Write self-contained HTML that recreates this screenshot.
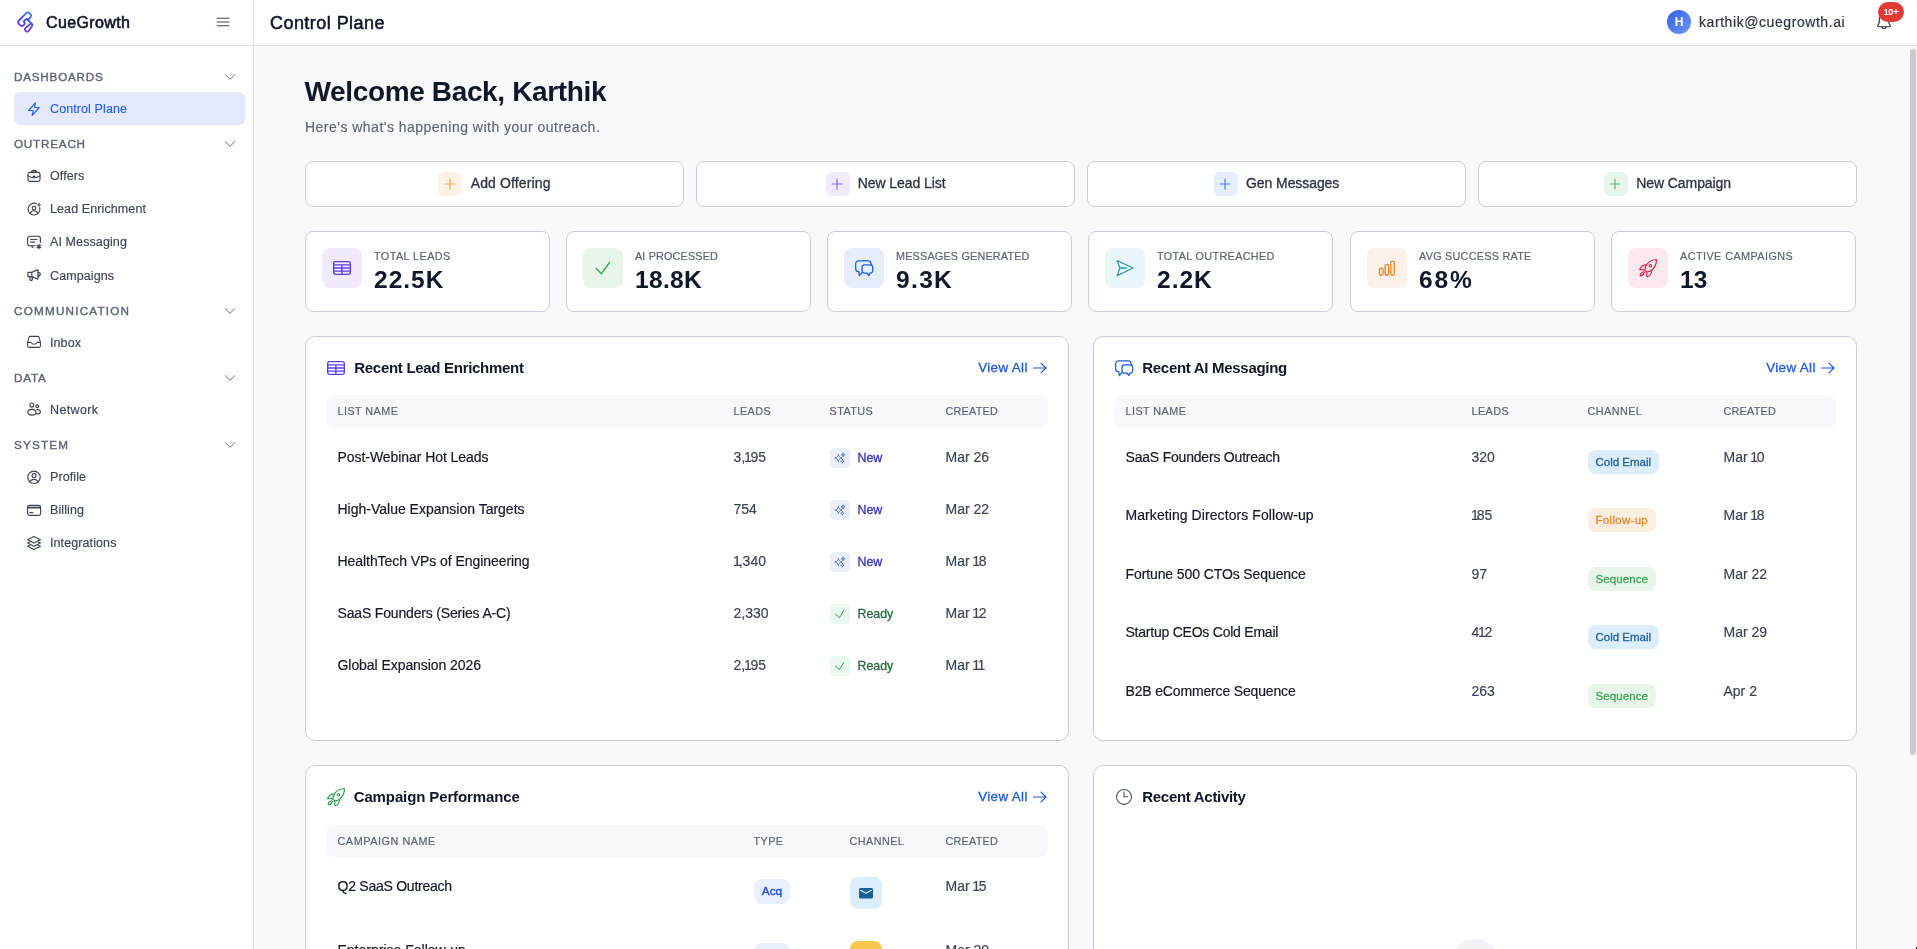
<!DOCTYPE html>
<html lang="en">
<head>
<meta charset="utf-8">
<title>CueGrowth – Control Plane</title>
<style>
*{box-sizing:border-box;margin:0;padding:0}
html,body{width:1917px;height:949px;overflow:hidden;background:#f8f9fb;font-family:"Liberation Sans",sans-serif;color:#111827}
svg{display:block}
#sidebar,#top,#main{will-change:transform}
/* ---------- sidebar ---------- */
#sidebar{position:absolute;left:0;top:0;width:254px;height:949px;background:#fff;border-right:1px solid #e3e6ec}
#brand{position:absolute;left:0;top:0;width:253px;height:46px;border-bottom:1px solid #e3e6ec}
#brand .logo{position:absolute;left:10px;top:5px}
#brand .name{position:absolute;left:46px;top:13.2px;font-size:16px;font-weight:400;line-height:20px;letter-spacing:.38px;color:#0f172a;-webkit-text-stroke:.6px #0f172a}
#brand .burger{position:absolute;left:216px;top:17px}
.sec{position:absolute;left:14px;width:231px;height:20px;font-size:11.7px;font-weight:400;letter-spacing:.78px;line-height:20px;color:#5b6579;-webkit-text-stroke:.38px #5b6579}
.sec svg{position:absolute;right:9px;top:4.5px}
.nav{position:absolute;left:14px;width:231px;height:33px;border-radius:6px;font-size:12.5px;line-height:33px;color:#3b4558;padding:1.3px 0 0 36px;white-space:nowrap;letter-spacing:.1px;-webkit-text-stroke:.15px}
.nav svg{position:absolute;left:12px;top:8.5px}
.nav.on{background:#e4eafb;color:#2563eb}
/* ---------- header ---------- */
#top{position:absolute;left:254px;top:0;width:1663px;height:46px;background:#fff;border-bottom:1px solid #e3e6ec}
#top h1{position:absolute;left:16px;top:11px;font-size:18px;line-height:24px;font-weight:400;letter-spacing:.45px;-webkit-text-stroke:.55px #0f172a;color:#0f172a;white-space:nowrap}
#top .avatar{position:absolute;left:1413px;top:10px;width:24px;height:24px;border-radius:50%;background:linear-gradient(135deg,#2f62e6,#6f97f0);color:#fff;font-size:12px;font-weight:700;line-height:24px;text-align:center}
#top .mail{position:absolute;left:1445px;top:12.4px;font-size:14px;line-height:20px;letter-spacing:.57px;color:#2b3445;-webkit-text-stroke:.2px #2b3445;white-space:nowrap}
#top .bell{position:absolute;left:1621px;top:13px}
#top .badge{position:absolute;left:1624px;top:2px;width:26px;height:20px;border-radius:10px;background:#e53935;color:#fff;font-size:9.500px;font-weight:700;letter-spacing:-.3px;line-height:20px;text-align:center}
/* ---------- main ---------- */
#main{position:absolute;left:254px;top:46px;width:1663px;height:903px;overflow:hidden}
#thumb{position:absolute;left:1656px;top:3px;width:6px;height:706px;border-radius:3px;background:#c9cbd1}
#main h2{position:absolute;left:50.5px;top:26px;font-size:28px;line-height:40px;font-weight:700;letter-spacing:-.36px;color:#0f172a;white-space:nowrap}
#main .sub{position:absolute;left:51px;top:71px;font-size:14px;line-height:20px;letter-spacing:.48px;color:#5b6579;white-space:nowrap;-webkit-text-stroke:.15px}

/* quick actions */
.qa{position:absolute;top:115px;width:379px;height:46px;background:#fff;border:1px solid #c9ceda;border-radius:8px;display:flex;align-items:center;justify-content:center;font-size:14px;letter-spacing:.12px;padding-bottom:1.200px;color:#2b3445;-webkit-text-stroke:.3px #2b3445;white-space:nowrap}
.qa i{display:block;width:24px;height:24px;border-radius:6px;margin-right:8.300px;position:relative;top:.6px}
.qa i svg{position:absolute;left:5.500px;top:5.500px}
/* stat cards */
.st{position:absolute;top:185px;width:245px;height:81px;background:#fff;border:1px solid #c9ceda;border-radius:8px}
.st i{position:absolute;left:16px;top:16px;width:40px;height:40px;border-radius:8px}
.st i svg{position:absolute;left:10px;top:10px}
.st .l{position:absolute;left:68px;top:17px;font-size:10.8px;line-height:14px;letter-spacing:.45px;color:#5b6579;white-space:nowrap;-webkit-text-stroke:.2px #5b6579}
.st .v{position:absolute;left:68px;top:32.600px;font-size:24.5px;line-height:30px;font-weight:700;letter-spacing:1px;color:#0f172a;white-space:nowrap}
/* panels */
.pn{position:absolute;width:764px;background:#fff;border:1px solid #c9ceda;border-radius:10px}
.pn .ic{position:absolute;left:20px;top:21px}
.pn h3{position:absolute;left:48.3px;top:21px;font-size:15px;line-height:20px;font-weight:700;letter-spacing:-.3px;color:#0f172a;white-space:nowrap}
.pn .va{position:absolute;right:20px;top:20.7px;font-size:13.4px;line-height:20px;color:#1d5bdb;-webkit-text-stroke:.3px #1d5bdb;letter-spacing:.38px;white-space:nowrap;padding-right:20.2px;text-decoration:none}
.pn .va svg{position:absolute;right:0;top:3.6px}
.tb{position:absolute;left:20px;top:58px;width:722px}
.th{position:relative;height:33px;background:#f7f8fa;border-radius:8px;font-size:10.8px;line-height:33px;letter-spacing:.45px;color:#5b6579;-webkit-text-stroke:.2px #5b6579}
.tr{position:relative;font-size:14px;color:#3b4558;-webkit-text-stroke:.18px}
.th>span,.tr>span{position:absolute;top:0;white-space:nowrap}
.tr>span{top:.3px}
.tr .n{color:#111827}
.c1{left:11.5px}
.o{margin:0 -1.3px}
.ol{margin:0 -2px 0 -.6px}

.t1 .tr{height:52px;line-height:52px}
.t2 .tr{height:58.5px;line-height:52px}
.t3 .tr{height:64px;line-height:52px}
.tb.t3{top:59px}.t3 .th{height:32px}
.th+.tr{margin-top:3px}
.t1 .c2{left:407.5px}.t1 .c3{left:503.5px}.t1 .c4{left:619.5px}
.t2 .c2{left:357.5px}.t2 .c3{left:473.5px}.t2 .c4{left:609.5px}
.t3 .c2{left:427.5px}.t3 .c3{left:523.5px}.t3 .c4{left:619.5px}
.s{font-size:12.4px;padding-left:28px;-webkit-text-stroke:.3px;margin-top:.8px}
.s i{position:absolute;left:0;top:16.2px;width:20px;height:20px;border-radius:4.5px}
.s.new{color:#3636b2}.s.new i{background:#ebf0fd}
.s.rdy{color:#266b3e}.s.rdy i{background:#eaf9f0}
.bd{display:block;margin-top:19px;height:24px;border-radius:8px;padding:0 8px;font-size:11.5px;line-height:24px;font-weight:400;-webkit-text-stroke:.3px}
.ce{background:#dcedfc;color:#24609a}
.fu{background:#fdeee2;color:#e8872e;letter-spacing:.3px}
.sq{background:#e8f5eb;color:#3aa655;letter-spacing:.1px}
.acq{background:#e9effc;color:#2456e0;font-size:11.800px;border-radius:8px;height:25px;line-height:25px;padding:0 8.300px;-webkit-text-stroke:.42px}
.ch{display:block;margin-top:17px;width:32px;height:32px;border-radius:8px;position:relative}
.ch svg{position:absolute;left:9px;top:10.700px}
.ch.mail{background:#dcedfc}
.ch.li{background:#f7c84e}
.empty{position:absolute;left:356.5px;top:173px;width:48px;height:48px;border-radius:50%;background:#f0f2f6}
#corner{position:absolute;right:0;bottom:0;width:1px;height:2px;background:#1b1b1b;box-shadow:-1px 0 0 #fff,0 -1px 0 #fff,-1px -1px 0 #fff}
</style>
</head>
<body>
<aside id="sidebar">
  <div id="brand">
    <span class="logo"><svg width="40" height="35" viewBox="0 0 40 35" fill="none" stroke="url(#lg)" stroke-width="1.75" stroke-linecap="round" stroke-linejoin="round"><defs><linearGradient id="lg" x1="8" y1="26" x2="23" y2="7" gradientUnits="userSpaceOnUse"><stop offset="0" stop-color="#8a2ff2"/><stop offset=".45" stop-color="#4a3df5"/><stop offset="1" stop-color="#2088f6"/></linearGradient></defs><path d="M16.16 8.17Q17.70 6.60 19.31 8.10L20.39 9.10Q22.00 10.60 20.46 12.17L18.66 14.03Q18.00 14.70 17.15 14.30L17.15 14.30Q16.30 13.90 15.62 14.55L14.25 15.88Q13.30 16.80 14.35 17.60L14.35 17.60Q15.40 18.40 14.42 19.28L13.24 20.33Q11.60 21.80 10.10 20.19L8.80 18.81Q7.30 17.20 8.84 15.63Z"/><path d="M16.60 14.00L21.46 18.48Q23.00 19.90 21.77 21.60L18.73 25.80Q17.50 27.50 15.88 26.16L15.62 25.94Q14.00 24.60 15.55 23.19L20.80 18.40"/></svg></span>
    <span class="name">CueGrowth</span>
    <span class="burger"><svg width="14" height="10" viewBox="0 0 14 10" fill="none" stroke="#3b4558" stroke-width="1.1" stroke-linecap="round"><path d="M1 1.3h12M1 5h12M1 8.700h12"/></svg></span>
  </div>
  <nav id="menu">
    <div class="sec" style="top:66.6px">DASHBOARDS<svg width="12" height="12" viewBox="0 0 12 12" fill="none" stroke="#677084" stroke-width="1" stroke-linecap="round" stroke-linejoin="round"><path d="M1.300 3.700L6 8.300l4.700-4.600"/></svg></div>
    <a class="nav on" style="top:92px"><svg width="16" height="16" viewBox="0 0 16 16" fill="none" stroke="#2563eb" stroke-width="1.2" stroke-linecap="round" stroke-linejoin="round"><path d="M9.4 1.8L2.7 9.5h4.5l-1 4.8 7.1-7.8H8.6z"/></svg>Control Plane</a>
    <div class="sec" style="top:133.8px">OUTREACH<svg width="12" height="12" viewBox="0 0 12 12" fill="none" stroke="#677084" stroke-width="1" stroke-linecap="round" stroke-linejoin="round"><path d="M1.300 3.700L6 8.300l4.700-4.600"/></svg></div>
    <a class="nav" style="top:159px"><svg width="16" height="16" viewBox="0 0 16 16" fill="none" stroke="#3b4558" stroke-width="1.15" stroke-linecap="round" stroke-linejoin="round"><rect x="2" y="4.400" width="12" height="8.900" rx="1.900"/><path d="M5.600 4.400v-.5a1.700 1.700 0 0 1 1.700-1.700h1.400a1.700 1.700 0 0 1 1.700 1.700v.5z" fill="#3b4558" fill-opacity=".55"/><path d="M2 7.900c1.900 1.300 3.900 1.900 6 1.900s4.100-.6 6-1.900M7.100 8.300h1.800"/></svg>Offers</a>
    <a class="nav" style="top:192px"><svg width="16" height="16" viewBox="0 0 16 16" fill="none" stroke="#3b4558" stroke-width="1.15" stroke-linecap="round" stroke-linejoin="round"><path d="M13.700 6.500A5.900 5.900 0 1 1 10.200 2.600"/><circle cx="8" cy="7.100" r="1.800"/><path d="M4.500 12.400c.3-1.700 1.600-2.700 3.500-2.700s3.200 1 3.500 2.700"/><path d="M13 2.100c.150 1.150.650 1.650 1.800 1.800-1.150.150-1.650.650-1.800 1.800-.150-1.150-.650-1.650-1.800-1.800 1.150-.150 1.650-.650 1.800-1.800z" fill="#3b4558" stroke-width=".4"/></svg>Lead Enrichment</a>
    <a class="nav" style="top:225px"><svg width="16" height="16" viewBox="0 0 16 16" fill="none" stroke="#3b4558" stroke-width="1.15" stroke-linecap="round" stroke-linejoin="round"><path d="M9.300 11.700H4.900l1.900 1.800M4.900 11.700H3.900A2.300 2.300 0 0 1 1.600 9.400V4.500A2.300 2.300 0 0 1 3.900 2.200h8.200a2.300 2.300 0 0 1 2.300 2.300v3.800"/><path d="M4.700 5.500h6.200M4.700 8.100h3.900"/><path d="M12.900 10.400v4.400M11 11.500l3.800 2.200M11 13.700l3.800-2.200" stroke-width="1.200"/><circle cx="12.900" cy="12.600" r="1.100" fill="#3b4558" stroke="none"/></svg>AI Messaging</a>
    <a class="nav" style="top:258.5px"><svg width="16" height="16" viewBox="0 0 16 16" fill="none" stroke="#3b4558" stroke-width="1.15" stroke-linecap="round" stroke-linejoin="round"><path d="M2 5.300h3.800l5.600-2.400c.3-.1.600.1.600.4v8.300c0 .3-.3.500-.6.400L5.800 9.600H2z" stroke-width="1.250"/><path d="M5.800 5.300v4.300"/><path d="M4 9.600v3.200c0 .3.200.5.500.5h1.300c.3 0 .5-.2.500-.5V9.900" stroke-width="1.250"/><path d="M12.300 5.300c1.200.2 2 .9 2 1.850s-.8 1.650-2 1.850" stroke-width="1.300"/></svg>Campaigns</a>
    <div class="sec" style="top:300.5px"><span style="letter-spacing:1.22px">COMMUNICATION</span><svg width="12" height="12" viewBox="0 0 12 12" fill="none" stroke="#677084" stroke-width="1" stroke-linecap="round" stroke-linejoin="round"><path d="M1.300 3.700L6 8.300l4.700-4.600"/></svg></div>
    <a class="nav" style="top:326px"><svg width="16" height="16" viewBox="0 0 16 16" fill="none" stroke="#3b4558" stroke-width="1.15" stroke-linecap="round" stroke-linejoin="round"><g transform="translate(.55 -1.150) scale(.935 1)"><path d="M3.900 2.500h8.200c.600 0 1.100.400 1.300 1l1.400 4.600c.100.200.100.400.100.600v3.200a1.600 1.600 0 0 1-1.600 1.600H2.700a1.600 1.600 0 0 1-1.600-1.600V8.700c0-.200 0-.400.100-.600L2.600 3.500c.200-.600.700-1 1.300-1z"/><path d="M1.300 8.500h3.100c.300 0 .500.150.700.400.600.900 1.600 1.500 2.900 1.500s2.300-.600 2.900-1.500c.200-.250.400-.400.700-.400h3.100"/></g></svg>Inbox</a>
    <div class="sec" style="top:367.6px">DATA<svg width="12" height="12" viewBox="0 0 12 12" fill="none" stroke="#677084" stroke-width="1" stroke-linecap="round" stroke-linejoin="round"><path d="M1.300 3.700L6 8.300l4.700-4.600"/></svg></div>
    <a class="nav" style="top:393px"><svg width="16" height="16" viewBox="0 0 16 16" fill="none" stroke="#3b4558" stroke-width="1.15" stroke-linecap="round" stroke-linejoin="round"><g transform="translate(.5 -.9) scale(.94 1)"><circle cx="5.700" cy="3.900" r="2.050"/><path d="M1.300 11.500c0-1.900 1.700-3.200 4.400-3.200s4.400 1.300 4.400 3.200c0 1.700-1.800 2.500-4.400 2.500s-4.400-.8-4.400-2.500z"/><circle cx="11.500" cy="5.200" r="1.500"/><path d="M10.800 8.600c.3-.1.600-.1.900-.1 1.900 0 3.100.9 3.100 2.300 0 1.300-1.200 1.900-2.900 1.900-.5 0-1-.050-1.400-.150"/></g></svg><span style="letter-spacing:.36px">Network</span></a>
    <div class="sec" style="top:434.5px"><span style="letter-spacing:1.2px">SYSTEM</span><svg width="12" height="12" viewBox="0 0 12 12" fill="none" stroke="#677084" stroke-width="1" stroke-linecap="round" stroke-linejoin="round"><path d="M1.300 3.700L6 8.300l4.700-4.600"/></svg></div>
    <a class="nav" style="top:460px"><svg width="16" height="16" viewBox="0 0 16 16" fill="none" stroke="#3b4558" stroke-width="1.15" stroke-linecap="round" stroke-linejoin="round"><circle cx="8" cy="8.300" r="6.200"/><circle cx="8" cy="6.500" r="1.950"/><path d="M3.900 12.900c.7-1.700 2.200-2.600 4.100-2.600s3.400.9 4.100 2.600"/></svg>Profile</a>
    <a class="nav" style="top:493px"><svg width="16" height="16" viewBox="0 0 16 16" fill="none" stroke="#3b4558" stroke-width="1.15" stroke-linecap="round" stroke-linejoin="round"><rect x="1.600" y="3.300" width="13" height="10.100" rx="1.900"/><path d="M1.600 5.600h13" stroke-width="1.800" stroke-linecap="butt"/><path d="M3.900 10.700h2.700" stroke-width="1.300"/></svg>Billing</a>
    <a class="nav" style="top:526px"><svg width="16" height="16" viewBox="0 0 16 16" fill="none" stroke="#3b4558" stroke-width="1.15" stroke-linecap="round" stroke-linejoin="round"><path d="M8 1.500l6.400 3.200L8 7.900 1.600 4.700z"/><path d="M3.800 6.900L1.600 8l6.400 3.200L14.400 8l-2.200-1.100"/><path d="M3.800 10.200l-2.200 1.100 6.400 3.200 6.400-3.200-2.200-1.100"/></svg>Integrations</a>
  </nav>
</aside>
<header id="top">
  <h1>Control Plane</h1>
  <span class="avatar">H</span>
  <span class="mail">karthik@cuegrowth.ai</span>
  <span class="bell"><svg width="18" height="18" viewBox="0 0 18 18" fill="none" stroke="#2b3445" stroke-width="1.15" stroke-linecap="round" stroke-linejoin="round"><path d="M9 1.800c-2.800 0-4.700 2.100-4.700 4.800v2.900L2.700 12.700c-.2.500.1 1 .6 1h11.400c.5 0 .8-.5.600-1l-1.600-3.200V6.600c0-2.700-1.900-4.800-4.700-4.800z"/><path d="M6.900 13.900c.2 1.100 1 1.800 2.100 1.800s1.900-.7 2.100-1.800"/></svg></span>
  <span class="badge">10+</span>
</header>
<main id="main">
  <h2>Welcome Back, Karthik</h2>
  <p class="sub">Here's what's happening with your outreach.</p>
  <nav id="actions">
    <a class="qa" style="left:51px"><i style="background:#fdf0e4"><svg width="12" height="12" viewBox="0 0 12 12"><path d="M6 1.100v9.800M1.100 6h9.800" stroke="#f0a35a" stroke-width="1.2" stroke-linecap="round" fill="none"/></svg></i>Add Offering</a>
    <a class="qa" style="letter-spacing:-.08px;left:442px"><i style="background:#efeafc"><svg width="12" height="12" viewBox="0 0 12 12"><path d="M6 1.100v9.800M1.100 6h9.800" stroke="#8b6fe0" stroke-width="1.2" stroke-linecap="round" fill="none"/></svg></i>New Lead List</a>
    <a class="qa" style="letter-spacing:-.08px;left:833px"><i style="background:#e6edfc"><svg width="12" height="12" viewBox="0 0 12 12"><path d="M6 1.100v9.800M1.100 6h9.800" stroke="#4f7be8" stroke-width="1.2" stroke-linecap="round" fill="none"/></svg></i>Gen Messages</a>
    <a class="qa" style="letter-spacing:-.08px;left:1224px"><i style="background:#e8f5eb"><svg width="12" height="12" viewBox="0 0 12 12"><path d="M6 1.100v9.800M1.100 6h9.800" stroke="#5cb878" stroke-width="1.2" stroke-linecap="round" fill="none"/></svg></i>New Campaign</a>
  </nav>
  <section id="stats">
    <div class="st" style="left:51px"><i style="background:#efeafc"><svg width="20" height="20" viewBox="0 0 20 20" fill="none" stroke="#5f3be3" stroke-width="1.35"><rect x="1.650" y="3.650" width="16.700" height="12.700" rx="1.800"/><path d="M1.650 6.900h16.700M1.650 10h16.700M1.650 13.150h16.700M9.900 6.900v9.450"/></svg></i><span class="l">TOTAL LEADS</span><span class="v">22.5K</span></div>
    <div class="st" style="left:312px"><i style="background:#e8f5eb"><svg width="20" height="20" viewBox="0 0 20 20" fill="none" stroke="#34a853" stroke-width="1.400" stroke-linecap="round" stroke-linejoin="round"><path d="M3.300 10.500l5.100 5.200 8.200-11.200"/></svg></i><span class="l" style="letter-spacing:0.17px">AI PROCESSED</span><span class="v" style="letter-spacing:0.35px">18.8K</span></div>
    <div class="st" style="left:573px"><i style="background:#e6edfc"><svg width="20" height="20" viewBox="0 0 20 20" fill="none" stroke="#1d5de0" stroke-width="1.250" stroke-linecap="round" stroke-linejoin="round"><path d="M17.100 6.800V5.700A2.900 2.900 0 0 0 14.200 2.800H4.600A2.900 2.900 0 0 0 1.700 5.700v5.100a2.900 2.900 0 0 0 2.900 2.900h.2l.6 3.900 2.600-2.900"/><path d="M10.500 6.900h5.700a2.500 2.500 0 0 1 2.500 2.500v3.100a2.500 2.500 0 0 1-2.500 2.500h-.3l-.9 2.500-2.100-2.500h-2.400a2.500 2.500 0 0 1-2.500-2.500V9.400a2.500 2.500 0 0 1 2.500-2.500z"/></svg></i><span class="l" style="letter-spacing:0.2px">MESSAGES GENERATED</span><span class="v" style="letter-spacing:1.35px">9.3K</span></div>
    <div class="st" style="left:834px"><i style="background:#e9f5f8"><svg width="20" height="20" viewBox="0 0 20 20" fill="none" stroke="#2b9bb0" stroke-width="1.300" stroke-linecap="round" stroke-linejoin="round"><path d="M2.200 2.700l15.900 7.300-15.900 7.600 2.700-7.600zM4.900 10h6.400"/></svg></i><span class="l" style="letter-spacing:0.36px">TOTAL OUTREACHED</span><span class="v">2.2K</span></div>
    <div class="st" style="left:1096px"><i style="background:#fdf2e9"><svg width="20" height="20" viewBox="0 0 20 20" fill="none" stroke="#e8832a" stroke-width="1.300"><rect x="2.550" y="10.150" width="3.500" height="7.100" rx="1.450"/><rect x="8.150" y="6.450" width="3.500" height="10.800" rx="1.450"/><rect x="13.800" y="3.050" width="3.500" height="14.200" rx="1.450"/></svg></i><span class="l" style="letter-spacing:0.27px">AVG SUCCESS RATE</span><span class="v" style="letter-spacing:1.9px">68%</span></div>
    <div class="st" style="left:1357px"><i style="background:#fbe9ed"><svg width="20" height="20" viewBox="-1 -1 20 20" fill="none" stroke="#d81e4a" stroke-width="1.150" stroke-linecap="round" stroke-linejoin="round"><path d="M17.500.500C12.500.900 8.600 3.300 6.900 7c-.7 1.500-1.100 3-1.200 4.400l2.800 1.600c1.400-.3 2.800-.900 4-1.800 3.300-2.400 5-6.200 5-10.700z"/><circle cx="11.400" cy="6.700" r="1.250"/><path d="M7.200 5.900C5.300 5.800 3.600 6.500 2.300 7.900 1.500 8.800.900 9.800.600 10.700l4.700-.100"/><path d="M12.500 11.500c.2 1.900-.4 3.600-1.700 4.900-.900.800-1.900 1.300-2.900 1.600l-.200-4.700"/><path d="M4.600 12.700c-1.500.300-2.500 1.100-3 2.300-.3.700-.4 1.300-.400 1.800.5 0 1.100-.100 1.800-.400 1.200-.5 2-1.500 2.300-3"/></svg></i><span class="l">ACTIVE CAMPAIGNS</span><span class="v" style="letter-spacing:0px">13</span></div>
  </section>
  <section class="pn" id="p1" style="left:51px;top:290px;height:405px">
    <span class="ic"><svg width="20" height="20" viewBox="0 0 20 20" fill="none" stroke="#5f3be3" stroke-width="1.35"><rect x="1.650" y="3.650" width="16.700" height="12.700" rx="1.800"/><path d="M1.650 6.900h16.700M1.650 10h16.700M1.650 13.150h16.700M9.900 6.900v9.450"/></svg></span><h3>Recent Lead Enrichment</h3><a class="va">View All<svg width="16" height="14" viewBox="0 0 16 14"><path d="M1.500 7h12.500M9 2.100L14 7l-5 4.900" stroke="#1d5bdb" stroke-width="1.2" stroke-linecap="round" stroke-linejoin="round" fill="none"/></svg></a>
    <div class="tb t1">
      <div class="th"><span class="c1">LIST NAME</span><span class="c2">LEADS</span><span class="c3">STATUS</span><span class="c4" style="letter-spacing:.25px">CREATED</span></div>
      <div class="tr"><span class="c1 n" style="letter-spacing:-0.06px">Post-Webinar Hot Leads</span><span class="c2">3,<span class="o">1</span>95</span><span class="c3 s new"><i><svg width="20" height="20" viewBox="0 0 20 20" fill="none" stroke="#5468e6" stroke-width=".9" stroke-linejoin="round"><path d="M8.400 6.300c.3 2.200 1.200 3.200 3.600 3.700-2.400.5-3.300 1.500-3.600 3.700-.3-2.200-1.200-3.200-3.600-3.700 2.400-.5 3.300-1.500 3.600-3.700z"/><path d="M13.100 4.700c.2 1.300.7 1.800 2 2.100-1.300.300-1.800.800-2 2.100-.2-1.300-.7-1.800-2-2.100 1.300-.300 1.800-.800 2-2.100z" fill="#5468e6" fill-opacity=".45"/><path d="M12.400 11.400c.2 1.200.6 1.700 1.800 1.900-1.200.2-1.600.7-1.800 1.900-.2-1.200-.6-1.700-1.800-1.900 1.200-.2 1.600-.7 1.800-1.900z"/></svg></i>New</span><span class="c4">Mar 26</span></div>
      <div class="tr"><span class="c1 n">High-Value Expansion Targets</span><span class="c2">754</span><span class="c3 s new"><i><svg width="20" height="20" viewBox="0 0 20 20" fill="none" stroke="#5468e6" stroke-width=".9" stroke-linejoin="round"><path d="M8.400 6.300c.3 2.200 1.200 3.200 3.600 3.700-2.400.5-3.300 1.500-3.600 3.700-.3-2.200-1.200-3.200-3.600-3.700 2.400-.5 3.300-1.500 3.600-3.700z"/><path d="M13.100 4.700c.2 1.300.7 1.800 2 2.100-1.300.300-1.800.800-2 2.100-.2-1.300-.7-1.800-2-2.100 1.300-.300 1.800-.800 2-2.100z" fill="#5468e6" fill-opacity=".45"/><path d="M12.400 11.400c.2 1.200.6 1.700 1.800 1.900-1.200.2-1.600.7-1.800 1.900-.2-1.200-.6-1.700-1.800-1.900 1.200-.2 1.600-.7 1.800-1.900z"/></svg></i>New</span><span class="c4">Mar 22</span></div>
      <div class="tr"><span class="c1 n" style="letter-spacing:-0.06px">HealthTech VPs of Engineering</span><span class="c2"><span class="o ol">1</span>,340</span><span class="c3 s new"><i><svg width="20" height="20" viewBox="0 0 20 20" fill="none" stroke="#5468e6" stroke-width=".9" stroke-linejoin="round"><path d="M8.400 6.300c.3 2.200 1.200 3.200 3.600 3.700-2.400.5-3.300 1.500-3.600 3.700-.3-2.200-1.200-3.200-3.600-3.700 2.400-.5 3.300-1.500 3.600-3.700z"/><path d="M13.100 4.700c.2 1.300.7 1.800 2 2.100-1.300.300-1.800.800-2 2.100-.2-1.300-.7-1.800-2-2.100 1.300-.300 1.800-.800 2-2.100z" fill="#5468e6" fill-opacity=".45"/><path d="M12.400 11.400c.2 1.200.6 1.700 1.800 1.900-1.200.2-1.600.7-1.800 1.900-.2-1.200-.6-1.700-1.800-1.900 1.200-.2 1.600-.7 1.800-1.900z"/></svg></i>New</span><span class="c4">Mar <span class="o">1</span>8</span></div>
      <div class="tr"><span class="c1 n" style="letter-spacing:-0.17px">SaaS Founders (Series A-C)</span><span class="c2">2,330</span><span class="c3 s rdy"><i><svg width="20" height="20" viewBox="0 0 20 20" fill="none" stroke="#34a853" stroke-width="1" stroke-linecap="round" stroke-linejoin="round"><path d="M5.400 10.100l4 3.600 4.400-7.400"/></svg></i>Ready</span><span class="c4">Mar <span class="o">1</span>2</span></div>
      <div class="tr"><span class="c1 n" style="letter-spacing:-0.06px">Global Expansion 2026</span><span class="c2">2,<span class="o">1</span>95</span><span class="c3 s rdy"><i><svg width="20" height="20" viewBox="0 0 20 20" fill="none" stroke="#34a853" stroke-width="1" stroke-linecap="round" stroke-linejoin="round"><path d="M5.400 10.100l4 3.600 4.400-7.400"/></svg></i>Ready</span><span class="c4">Mar <span class="o">1</span><span class="o">1</span></span></div>
    </div>
  </section>
  <section class="pn" id="p2" style="left:839px;top:290px;height:405px">
    <span class="ic"><svg width="20" height="20" viewBox="0 0 20 20" fill="none" stroke="#1d5de0" stroke-width="1.250" stroke-linecap="round" stroke-linejoin="round"><path d="M17.100 6.800V5.700A2.900 2.900 0 0 0 14.200 2.800H4.600A2.900 2.900 0 0 0 1.700 5.700v5.100a2.900 2.900 0 0 0 2.900 2.900h.2l.6 3.900 2.600-2.900"/><path d="M10.500 6.900h5.700a2.500 2.500 0 0 1 2.500 2.500v3.100a2.500 2.500 0 0 1-2.500 2.500h-.3l-.9 2.500-2.100-2.500h-2.400a2.500 2.500 0 0 1-2.500-2.500V9.400a2.500 2.500 0 0 1 2.500-2.500z"/></svg></span><h3>Recent AI Messaging</h3><a class="va">View All<svg width="16" height="14" viewBox="0 0 16 14"><path d="M1.500 7h12.500M9 2.100L14 7l-5 4.900" stroke="#1d5bdb" stroke-width="1.2" stroke-linecap="round" stroke-linejoin="round" fill="none"/></svg></a>
    <div class="tb t2">
      <div class="th"><span class="c1">LIST NAME</span><span class="c2">LEADS</span><span class="c3">CHANNEL</span><span class="c4" style="letter-spacing:.25px">CREATED</span></div>
      <div class="tr" style="height:58px"><span class="c1 n" style="letter-spacing:-0.2px">SaaS Founders Outreach</span><span class="c2">320</span><span class="c3"><b class="bd ce">Cold Email</b></span><span class="c4">Mar <span class="o">1</span>0</span></div>
      <div class="tr" style="height:59px"><span class="c1 n" style="letter-spacing:0.076px">Marketing Directors Follow-up</span><span class="c2"><span class="o ol">1</span>85</span><span class="c3"><b class="bd fu">Follow-up</b></span><span class="c4">Mar <span class="o">1</span>8</span></div>
      <div class="tr" style="height:58px"><span class="c1 n" style="letter-spacing:-0.1px">Fortune 500 CTOs Sequence</span><span class="c2">97</span><span class="c3"><b class="bd sq">Sequence</b></span><span class="c4">Mar 22</span></div>
      <div class="tr" style="height:59px"><span class="c1 n" style="letter-spacing:-0.23px">Startup CEOs Cold Email</span><span class="c2">4<span class="o">1</span>2</span><span class="c3"><b class="bd ce">Cold Email</b></span><span class="c4">Mar 29</span></div>
      <div class="tr" style="height:58px"><span class="c1 n" style="letter-spacing:-0.16px">B2B eCommerce Sequence</span><span class="c2">263</span><span class="c3"><b class="bd sq">Sequence</b></span><span class="c4">Apr 2</span></div>
    </div>
  </section>
  <section class="pn" id="p3" style="left:51px;top:719px;height:405px">
    <span class="ic"><svg width="20" height="20" viewBox="-1 -1 20 20" fill="none" stroke="#2ea44f" stroke-width="1.150" stroke-linecap="round" stroke-linejoin="round"><path d="M17.500.500C12.500.900 8.600 3.300 6.900 7c-.7 1.500-1.100 3-1.200 4.400l2.800 1.600c1.400-.3 2.800-.900 4-1.800 3.300-2.400 5-6.200 5-10.700z"/><circle cx="11.400" cy="6.700" r="1.250"/><path d="M7.200 5.900C5.300 5.800 3.600 6.500 2.300 7.900 1.500 8.800.900 9.800.600 10.700l4.700-.100"/><path d="M12.500 11.500c.2 1.900-.4 3.600-1.700 4.900-.900.800-1.900 1.300-2.900 1.600l-.200-4.700"/><path d="M4.600 12.700c-1.500.300-2.500 1.100-3 2.300-.3.700-.4 1.300-.400 1.800.5 0 1.100-.100 1.800-.400 1.200-.5 2-1.500 2.300-3"/></svg></span><h3 style="letter-spacing:-.12px;left:47.700px">Campaign Performance</h3><a class="va">View All<svg width="16" height="14" viewBox="0 0 16 14"><path d="M1.500 7h12.500M9 2.100L14 7l-5 4.900" stroke="#1d5bdb" stroke-width="1.2" stroke-linecap="round" stroke-linejoin="round" fill="none"/></svg></a>
    <div class="tb t3">
      <div class="th"><span class="c1" style="letter-spacing:.57px">CAMPAIGN NAME</span><span class="c2">TYPE</span><span class="c3">CHANNEL</span><span class="c4" style="letter-spacing:.25px">CREATED</span></div>
      <div class="tr"><span class="c1 n" style="letter-spacing:-.25px">Q2 SaaS Outreach</span><span class="c2"><b class="bd acq">Acq</b></span><span class="c3"><i class="ch mail"><svg width="14" height="11" viewBox="0 0 14 11"><rect x="0" y="0" width="14" height="10.500" rx="1.400" fill="#1a5f96"/><path d="M1.500 2.300L7 5.300l5.500-3" stroke="#dceefc" stroke-width="1.100" fill="none" stroke-linecap="round" stroke-linejoin="round"/></svg></i></span><span class="c4">Mar <span class="o">1</span>5</span></div>
      <div class="tr"><span class="c1 n">Enterprise Follow-up</span><span class="c2"><b class="bd acq">Acq</b></span><span class="c3"><i class="ch li"></i></span><span class="c4">Mar 20</span></div>
    </div>
  </section>
  <section class="pn" id="p4" style="left:839px;top:719px;height:405px">
    <span class="ic"><svg width="20" height="20" viewBox="0 0 20 20" fill="none" stroke="#4b5468" stroke-width="1.100" stroke-linecap="round" stroke-linejoin="round"><circle cx="10" cy="9.900" r="7.450"/><path d="M10 4.700v5.100h3.700"/></svg></span><h3>Recent Activity</h3>
    <div class="empty"></div>
  </section>
  <div id="thumb"></div>
  <div id="corner"></div>
</main>
</body>
</html>
